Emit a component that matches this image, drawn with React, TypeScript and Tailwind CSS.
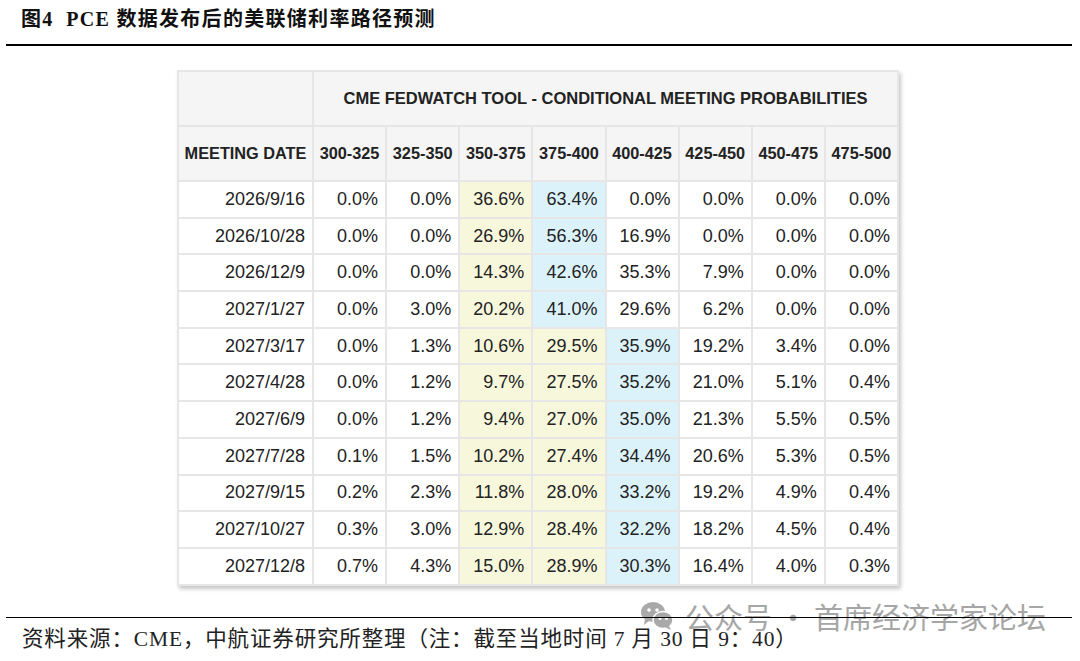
const rows: { date: string; vals: string[]; yellow: number[]; blue: number }[] = [
  { date: '2026/9/16', vals: ['0.0', '0.0', '36.6', '63.4', '0.0', '0.0', '0.0', '0.0'], yellow: [2], blue: 3 },
  { date: '2026/10/28', vals: ['0.0', '0.0', '26.9', '56.3', '16.9', '0.0', '0.0', '0.0'], yellow: [2], blue: 3 },
  { date: '2026/12/9', vals: ['0.0', '0.0', '14.3', '42.6', '35.3', '7.9', '0.0', '0.0'], yellow: [2], blue: 3 },
  { date: '2027/1/27', vals: ['0.0', '3.0', '20.2', '41.0', '29.6', '6.2', '0.0', '0.0'], yellow: [2], blue: 3 },
  { date: '2027/3/17', vals: ['0.0', '1.3', '10.6', '29.5', '35.9', '19.2', '3.4', '0.0'], yellow: [2, 3], blue: 4 },
  { date: '2027/4/28', vals: ['0.0', '1.2', '9.7', '27.5', '35.2', '21.0', '5.1', '0.4'], yellow: [2, 3], blue: 4 },
  { date: '2027/6/9', vals: ['0.0', '1.2', '9.4', '27.0', '35.0', '21.3', '5.5', '0.5'], yellow: [2, 3], blue: 4 },
  { date: '2027/7/28', vals: ['0.1', '1.5', '10.2', '27.4', '34.4', '20.6', '5.3', '0.5'], yellow: [2, 3], blue: 4 },
  { date: '2027/9/15', vals: ['0.2', '2.3', '11.8', '28.0', '33.2', '19.2', '4.9', '0.4'], yellow: [2, 3], blue: 4 },
  { date: '2027/10/27', vals: ['0.3', '3.0', '12.9', '28.4', '32.2', '18.2', '4.5', '0.4'], yellow: [2, 3], blue: 4 },
  { date: '2027/12/8', vals: ['0.7', '4.3', '15.0', '28.9', '30.3', '16.4', '4.0', '0.3'], yellow: [2, 3], blue: 4 },
];

const ranges = ['300-325', '325-350', '350-375', '375-400', '400-425', '425-450', '450-475', '475-500'];

function WeChatIcon() {
  return (
    <svg width="34" height="30" viewBox="0 0 34 30">
      <ellipse cx="13" cy="11" rx="12" ry="10" fill="#a9a9a9" />
      <path d="M5 18 L4 24 L10 19 Z" fill="#a9a9a9" />
      <circle cx="9" cy="9" r="1.8" fill="#fff" />
      <circle cx="17" cy="9" r="1.8" fill="#fff" />
      <ellipse cx="23" cy="19" rx="10" ry="8.5" fill="#a9a9a9" stroke="#fff" strokeWidth="1.5" />
      <path d="M29 25 L31 29 L25 26 Z" fill="#a9a9a9" />
      <circle cx="20" cy="17.5" r="1.5" fill="#fff" />
      <circle cx="26.5" cy="17.5" r="1.5" fill="#fff" />
    </svg>
  );
}

export default function App() {
  const serif = { fontFamily: '"Liberation Serif", "Noto Sans CJK SC", serif' };
  return (
    <div className="relative w-[1080px] h-[661px] bg-white overflow-hidden text-[#111]">
      {/* Title */}
      <div
        className="pl-[21px] pt-[5px] h-[33px] leading-[28px] text-[20px] font-bold tracking-[1.3px] whitespace-nowrap"
        style={serif}
      >
        图4&nbsp;&nbsp;PCE 数据发布后的美联储利率路径预测
      </div>
      <div className="mt-[11px] ml-[6px] mr-[8px] h-[2px] bg-black" />

      {/* Table */}
      <div className="mt-[24px] ml-[177px] w-[722px] shadow-[2px_3px_4px_rgba(0,0,0,0.22)] font-['Liberation_Sans',Arial,sans-serif] text-[#222]">
        <table className="w-full table-fixed border-collapse">
          <colgroup>
            <col className="w-[135px]" />
            {ranges.map((r) => (
              <col key={r} />
            ))}
          </colgroup>
          <thead>
            <tr className="h-[55px] bg-[#f5f5f5]">
              <th className="border-2 border-[#e6e6e6]" />
              <th colSpan={8} className="border-2 border-[#e6e6e6] text-[16.5px] font-bold text-center">
                CME FEDWATCH TOOL - CONDITIONAL MEETING PROBABILITIES
              </th>
            </tr>
            <tr className="h-[55px] bg-[#f5f5f5]">
              <th className="border-2 border-[#e6e6e6] text-[16.3px] font-bold text-center whitespace-nowrap">
                MEETING DATE
              </th>
              {ranges.map((r) => (
                <th key={r} className="border-2 border-[#e6e6e6] text-[16.3px] font-bold text-center whitespace-nowrap">
                  {r}
                </th>
              ))}
            </tr>
          </thead>
          <tbody>
            {rows.map((row) => (
              <tr key={row.date} className="h-[36.7px]">
                <td className="border-2 border-[#e6e6e6] text-right pr-[7px] text-[18px] bg-white">{row.date}</td>
                {row.vals.map((v, i) => (
                  <td
                    key={i}
                    className={
                      'border-2 border-[#e6e6e6] text-right pr-[7px] text-[18px] ' +
                      (row.yellow.includes(i) ? 'bg-[#f7f7dc]' : i === row.blue ? 'bg-[#dcf2fb]' : 'bg-white')
                    }
                  >
                    {v}%
                  </td>
                ))}
              </tr>
            ))}
          </tbody>
        </table>
      </div>

      {/* Watermark */}
      <div className="absolute left-[640px] top-[598px] flex items-center gap-[11px] text-[#a6a6a6]">
        <WeChatIcon />
        <span className="text-[29px] leading-[36px] font-['Noto_Sans_CJK_SC',sans-serif] font-normal whitespace-nowrap">
          公众号&nbsp;·&nbsp;首席经济学家论坛
        </span>
      </div>

      {/* Footer */}
      <div className="relative mt-[31px] ml-[6px] mr-[8px] h-[1.5px] bg-black" />
      <div className="pl-[22px] pt-[6px] text-[21.5px] leading-[30px] tracking-[0.85px] text-[#222] whitespace-nowrap" style={serif}>
        资料来源：CME，中航证券研究所整理（注：截至当地时间 7 月 30 日 9：40）
      </div>
    </div>
  );
}
